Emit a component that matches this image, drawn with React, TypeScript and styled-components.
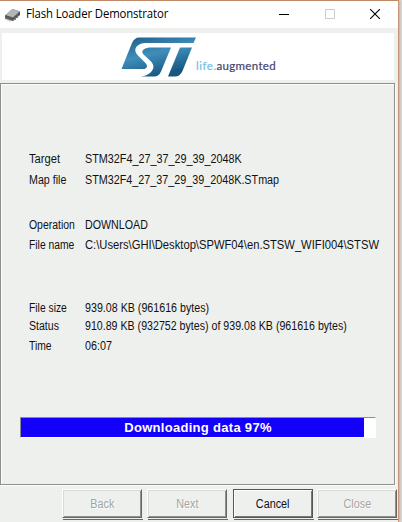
import React from 'react';
import styled, { createGlobalStyle } from 'styled-components';

const Global = createGlobalStyle`
  * { box-sizing: border-box; }
  html, body { margin: 0; padding: 0; overflow: hidden; background: #e3dfda; }
`;

const Window = styled.div`
  width: 399px;
  height: 522px;
  background: #eef0ee;
  border-top: 1px solid #c08a68;
  border-right: 1px solid #c9957a;
  box-shadow: 1px 0 3px #b5aaa2;
  display: flex;
  flex-direction: column;
  font-family: 'Liberation Sans', Arial, sans-serif;
  font-size: 12px;
  color: #111;
  white-space: pre;
`;

const TitleBar = styled.header`
  height: 27px;
  flex: none;
  background: #fff;
  display: flex;
  align-items: center;
  padding-left: 4px;
`;

const Title = styled.h1`
  margin: 0 0 0 5px;
  flex: 1;
  font: 400 12px/16px 'Open Sans', 'Noto Sans', sans-serif;
  letter-spacing: -0.12px;
  color: #000;
  transform: translateY(-1px) scaleX(0.945);
  transform-origin: left;
`;

const Controls = styled.div`
  display: flex;
  gap: 35.5px;
  padding-right: 18px;
  margin-top: -1px;
`;

const Banner = styled.div`
  flex: none;
  height: 47px;
  margin: 5px 4px 3px 2px;
  background: #fff;
  display: flex;
  padding: 4px 0 0 119px;
`;

const Slogan = styled.div`
  margin: 20px 0 0 -1px;
  font: 400 11.5px/18px 'Lato', sans-serif;
  letter-spacing: 0.3px;
  color: #45456f;
  -webkit-text-stroke: 0.2px currentColor;
`;

const Life = styled.span`
  color: #72bee5;
  letter-spacing: 0.5px;
`;

const Panel = styled.main`
  flex: none;
  height: 402px;
  width: 395px;
  border: 1px solid #8e908e;
  box-shadow: inset 1px 1px #fbfcfb, 1px 1px #fff;
  padding: 65px 0 0 28px;
`;

const Group = styled.dl<{ $gap: number }>`
  margin: 0 0 ${(p) => p.$gap}px;
`;

const Row = styled.div<{ $h: number }>`
  display: flex;
  height: ${(p) => p.$h}px;
  line-height: 20px;
`;

const Label = styled.dt`
  flex: none;
  width: 56px;
`;

const Value = styled.dd`
  flex: none;
  margin: 0;
`;

const Condensed = styled.span<{ $scale: number; $origin?: string }>`
  display: inline-block;
  transform: scaleX(${(p) => p.$scale});
  transform-origin: ${(p) => p.$origin ?? 'left'};
`;

const Track = styled.div`
  width: 356px;
  height: 21px;
  margin-left: -9px;
  border: 1px solid;
  border-color: #8c8c98 #fff #fff #8c8c98;
  background: #fff;
  display: grid;
`;

const Fill = styled.div`
  grid-area: 1 / 1;
  background: #1200fb;
`;

const Caption = styled.div`
  grid-area: 1 / 1;
  text-align: center;
  font-weight: 700;
  font-size: 13px;
  line-height: 19px;
  letter-spacing: 0.3px;
  color: #fff;
`;

const Footer = styled.footer`
  display: flex;
  padding: 4px 0 0 62px;
`;

const Button = styled.button<{ $primary?: boolean; $gap: number }>`
  width: 80px;
  height: 29px;
  flex: none;
  margin-right: ${(p) => p.$gap}px;
  padding: 2px 0 1px;
  font: inherit;
  letter-spacing: 0;
  background: #eef0ee;
  color: ${(p) => (p.$primary ? '#111' : '#a3a5a3')};
  text-shadow: ${(p) => (p.$primary ? 'none' : '1px 1px #fff')};
  border: 1px solid;
  border-color: ${(p) => (p.$primary ? '#555' : '#fff #666 #666 #fff')};
  box-shadow: ${(p) =>
    p.$primary
      ? 'inset 1px 1px #fff, inset -1px -1px #777, 1px 1px #eef0ee, 1px 2px #666'
      : 'inset 1px 1px #d8dad8, inset -1px -1px #8f918f, 1px 1px #eef0ee, 1px 2px #666'};
`;

const ChipIcon = () => (
  <svg width="17" height="14" viewBox="0 0 17 14">
    <path d="M1 7.500L8.500 1l7.500 2.500v3.500L9 13 1 10.500z" fill="#555756" />
    <path d="M1.500 7L8.500 1l7 2.500-6.500 6z" fill="#b4b6b5" />
    <path d="M2 8.500v3M4 9.500v3M6 10.500v3M9.500 11v2M11.500 9v3M13.500 7v3" stroke="#777" strokeWidth="0.8" />
  </svg>
);

const Logo = () => (
  <svg width="76" height="41" viewBox="0 0 76 41">
    <defs>
      <linearGradient id="st" gradientUnits="userSpaceOnUse" x1="20" y1="0" x2="30" y2="41">
        <stop offset="0" stopColor="#24658f" />
        <stop offset="0.45" stopColor="#3f8ebb" />
        <stop offset="1" stopColor="#16567f" />
      </linearGradient>
    </defs>
    <path fill="url(#st)" d="M0.500 32L11 6Q13.500 0.500 18 0.500H75L72.500 6H24Q16.500 6.500 14.500 11.500Q13.500 15 17 18.500L24.500 26Q28 30 23.500 32z" />
    <path fill="url(#st)" d="M28 10.500H50L40 34.500Q38 39.500 33 39.500H20Q29 38.500 32 32Q33.500 28 29.500 24L22 17Q19 12 28 10.500z" />
    <path fill="url(#st)" d="M59 10.500H71L61.500 34Q59 39.500 54 39.500H47z" />
  </svg>
);

const files = [
  ['Target', 'STM32F4_27_37_29_39_2048K', 21, 0.93, 0.9],
  ['Map file', 'STM32F4_27_37_29_39_2048K.STmap', 20, 0.89, 0.898],
] as const;
const operation = [
  ['Operation', 'DOWNLOAD', 20, 0.87, 0.89],
  ['File name', 'C:\\Users\\GHI\\Desktop\\SPWF04\\en.STSW_WIFI004\\STSW', 20, 0.86, 0.934],
] as const;
const progress = [
  ['File size', '939.08 KB (961616 bytes)', 18, 0.86, 0.89],
  ['Status', '910.89 KB (932752 bytes) of 939.08 KB (961616 bytes)', 20, 0.88, 0.886],
  ['Time', '06:07', 20, 0.86, 0.9],
] as const;

type Item = readonly [string, string, number, number, number];

const Details = ({ items, gap }: { items: readonly Item[]; gap: number }) => (
  <Group $gap={gap}>
    {items.map(([label, value, h, labelScale, valueScale]) => (
      <Row key={label} $h={h}>
        <Label><Condensed $scale={labelScale}>{label}</Condensed></Label>
        <Value><Condensed $scale={valueScale}>{value}</Condensed></Value>
      </Row>
    ))}
  </Group>
);

const ButtonText = ({ children }: { children: string }) => (
  <Condensed $scale={0.9} $origin="center">{children}</Condensed>
);

export default function App() {
  const percent = 97;
  return (
    <>
      <Global />
      <Window>
        <TitleBar>
          <ChipIcon />
          <Title>Flash Loader Demonstrator</Title>
          <Controls>
            <svg width="10" height="10"><path d="M0 5.500h10" stroke="#000" /></svg>
            <svg width="10" height="10"><path d="M.5.500h9v9h-9z" fill="none" stroke="#ccc" /></svg>
            <svg width="10" height="10"><path d="M0 0l10 10M10 0L0 10" stroke="#000" strokeWidth="1.100" /></svg>
          </Controls>
        </TitleBar>
        <Banner>
          <Logo />
          <Slogan><Life>life.</Life>augmented</Slogan>
        </Banner>
        <Panel>
          <Details items={files} gap={25} />
          <Details items={operation} gap={43} />
          <Details items={progress} gap={61} />
          <Track>
            <Fill style={{ width: `${percent}%` }} />
            <Caption>Downloading data {percent}%</Caption>
          </Track>
        </Panel>
        <Footer>
          <Button disabled $gap={5}><ButtonText>Back</ButtonText></Button>
          <Button disabled $gap={6}><ButtonText>Next</ButtonText></Button>
          <Button $primary $gap={4}><ButtonText>Cancel</ButtonText></Button>
          <Button disabled $gap={0}><ButtonText>Close</ButtonText></Button>
        </Footer>
      </Window>
    </>
  );
}
